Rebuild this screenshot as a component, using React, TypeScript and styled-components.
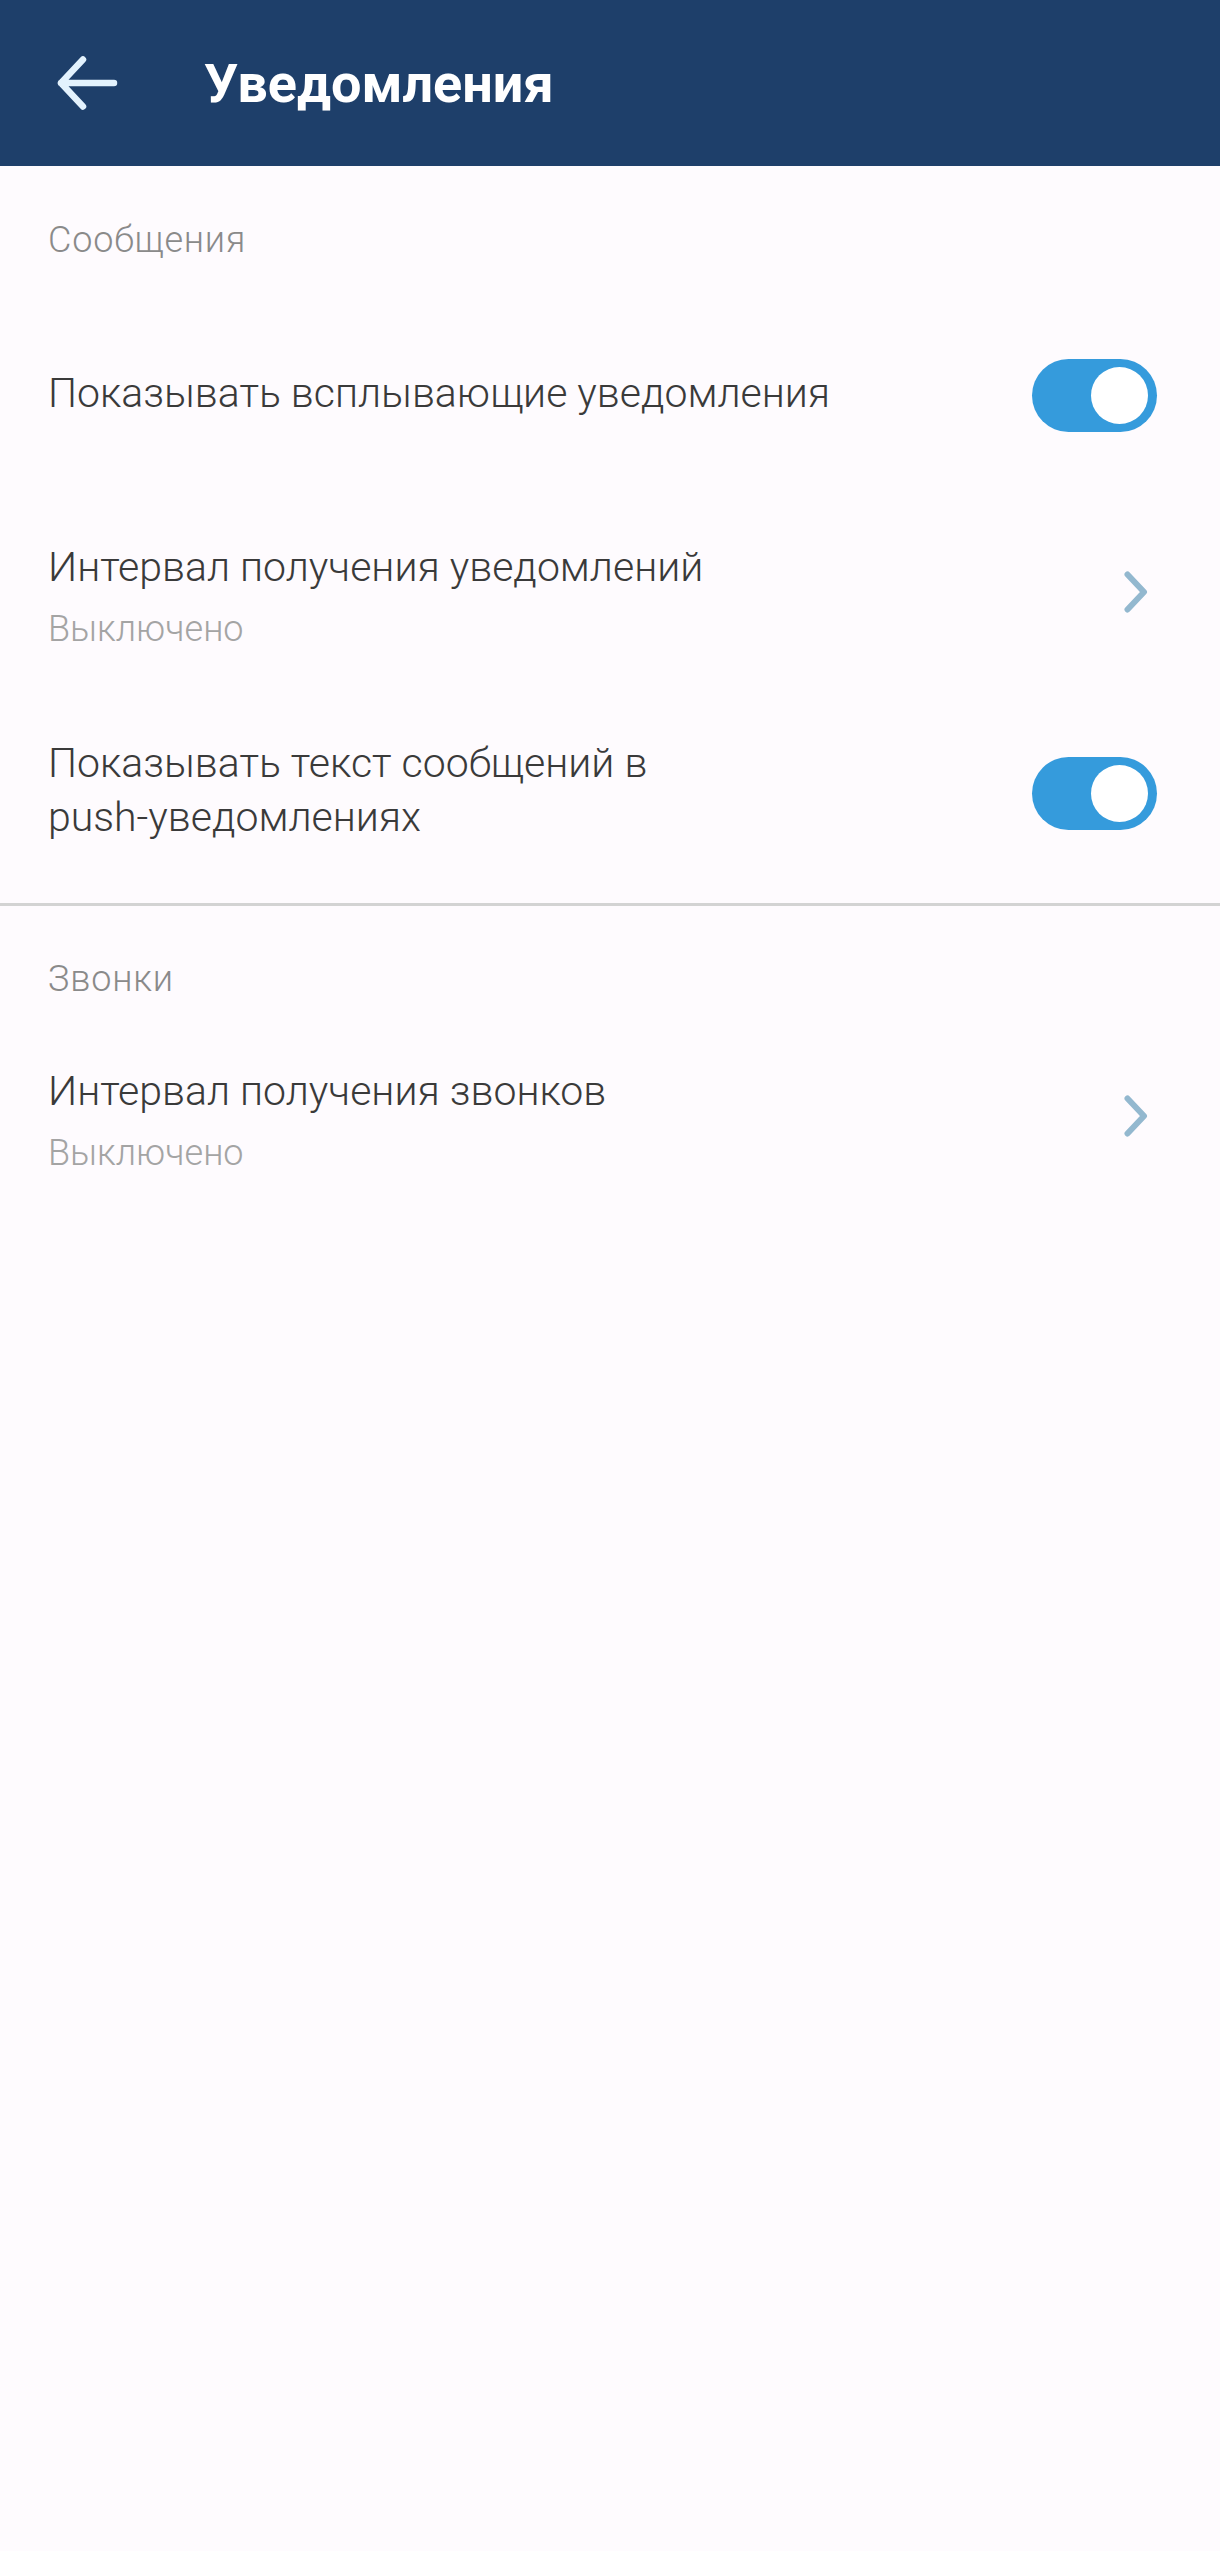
import React from "react";
import styled, { createGlobalStyle } from "styled-components";

const GlobalStyle = createGlobalStyle`
  html, body {
    margin: 0;
    padding: 0;
    background: #fefbfe;
  }
  body {
    font-family: Roboto, "Noto Sans", "DejaVu Sans", sans-serif;
    -webkit-font-smoothing: antialiased;
  }
`;

const Screen = styled.div`
  width: 1220px;
  min-height: 2551px;
  background: #fefbfe;
  display: flex;
  flex-direction: column;
`;

const AppBar = styled.header`
  height: 166px;
  background: #1e3f6a;
  display: flex;
  align-items: center;
  padding-left: 56px;
  box-sizing: border-box;
  flex-shrink: 0;
`;

const BackButton = styled.button`
  border: none;
  background: transparent;
  padding: 0;
  width: 68px;
  height: 60px;
  display: flex;
  align-items: center;
  justify-content: flex-start;
  cursor: pointer;
`;

const Title = styled.h1`
  margin: 0 0 0 80px;
  font-family: Roboto, "Noto Sans", sans-serif;
  font-weight: 700;
  font-size: 54px;
  color: #ffffff;
`;

const SectionTitle = styled.div<{ $pt: number }>`
  padding: ${(p) => p.$pt}px 48px 0;
  line-height: 48px;
  font-size: 36px;
  font-weight: 300;
  letter-spacing: 0.8px;
  color: #8a8a8a;
`;

const Row = styled.div<{ $pt: number; $pb: number }>`
  display: flex;
  align-items: center;
  justify-content: space-between;
  padding: ${(p) => p.$pt}px 63px ${(p) => p.$pb}px 48px;
  gap: 40px;
`;

const TextBlock = styled.div`
  display: flex;
  flex-direction: column;
  min-width: 0;
`;

const RowTitle = styled.div`
  font-size: 41px;
  line-height: 54px;
  font-weight: 300;
  color: #3a3a3a;
`;

const RowSubtitle = styled.div`
  margin-top: 8px;
  font-size: 36px;
  line-height: 54px;
  font-weight: 300;
  color: #a4a4a4;
`;

const SwitchTrack = styled.div<{ $on: boolean }>`
  width: 125px;
  height: 73px;
  margin-top: 6px;
  border-radius: 37px;
  background: ${(p) => (p.$on ? "#359bdc" : "#bdbdbd")};
  display: flex;
  align-items: center;
  justify-content: ${(p) => (p.$on ? "flex-end" : "flex-start")};
  padding: 0 9px;
  box-sizing: border-box;
  flex-shrink: 0;
`;

const SwitchThumb = styled.div`
  width: 57px;
  height: 57px;
  border-radius: 50%;
  background: #ffffff;
`;

const ChevronWrap = styled.div`
  width: 125px;
  display: flex;
  justify-content: flex-end;
  padding-right: 9px;
  margin-bottom: 12px;
  box-sizing: border-box;
  flex-shrink: 0;
`;

const Divider = styled.div`
  height: 3px;
  background: #d3d3d3;
`;

const BackArrow = () => (
  <svg width="62" height="56" viewBox="0 0 62 56" fill="none">
    <path
      d="M5 28 L27 4.5 M5 28 L27 51.5 M5 28 H58"
      stroke="#e3f2fd"
      strokeWidth="6.5"
      strokeLinecap="round"
      strokeLinejoin="round"
    />
  </svg>
);

const Chevron = () => (
  <svg width="24" height="42" viewBox="0 0 24 42" fill="none">
    <path
      d="M3.5 3.5 L20 21 L3.5 38.5"
      stroke="#93b8cf"
      strokeWidth="6"
      strokeLinecap="round"
      strokeLinejoin="round"
    />
  </svg>
);

const Switch = ({ on }: { on: boolean }) => (
  <SwitchTrack $on={on} role="switch" aria-checked={on}>
    <SwitchThumb />
  </SwitchTrack>
);

export default function App() {
  return (
    <>
      <GlobalStyle />
      <Screen>
        <AppBar>
          <BackButton aria-label="Назад">
            <BackArrow />
          </BackButton>
          <Title>Уведомления</Title>
        </AppBar>

        <SectionTitle $pt={50}>Сообщения</SectionTitle>

        <Row $pt={89} $pb={68}>
          <TextBlock>
            <RowTitle>Показывать всплывающие уведомления</RowTitle>
          </TextBlock>
          <Switch on />
        </Row>

        <Row $pt={40} $pb={40}>
          <TextBlock>
            <RowTitle>Интервал получения уведомлений</RowTitle>
            <RowSubtitle>Выключено</RowSubtitle>
          </TextBlock>
          <ChevronWrap>
            <Chevron />
          </ChevronWrap>
        </Row>

        <Row $pt={40} $pb={59}>
          <TextBlock>
            <RowTitle>
              Показывать текст сообщений в
              <br />
              push-уведомлениях
            </RowTitle>
          </TextBlock>
          <Switch on />
        </Row>

        <Divider />

        <SectionTitle $pt={49}>Звонки</SectionTitle>

        <Row $pt={61} $pb={40}>
          <TextBlock>
            <RowTitle>Интервал получения звонков</RowTitle>
            <RowSubtitle>Выключено</RowSubtitle>
          </TextBlock>
          <ChevronWrap>
            <Chevron />
          </ChevronWrap>
        </Row>
      </Screen>
    </>
  );
}
